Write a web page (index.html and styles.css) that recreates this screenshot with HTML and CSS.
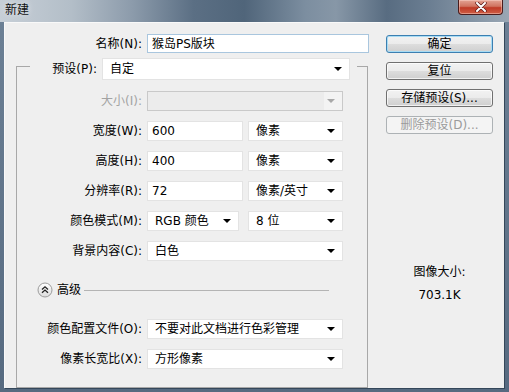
FILE: index.html
```html
<!DOCTYPE html>
<html lang="zh-CN">
<head>
  <meta charset="UTF-8" />
  <meta name="viewport" content="width=device-width, initial-scale=1.0"/>
  <title>新建</title>
  <link rel="stylesheet" href="styles.css">
</head>
<body>

  <div class="window">
    <div class="titlebar">
      <span class="title">新建</span>
      <div class="close-btn">
        <svg width="14" height="10" viewBox="0 0 14 10">
          <path d="M3 1 L11 9 M11 1 L3 9" stroke="#5a1a1a" stroke-width="3.4" stroke-linecap="round"/>
          <path d="M3 1 L11 9 M11 1 L3 9" stroke="#ffffff" stroke-width="2" stroke-linecap="round"/>
        </svg>
      </div>
    </div>

    <div class="client">
      <div class="form">
        <div class="row name-row">
          <label class="label name-label">名称(N):</label>
          <div class="field text focused w-name">猴岛PS版块</div>
        </div>

        <fieldset class="group">
          <legend class="preset">
            <label class="preset-label">预设(P):</label>
            <div class="field select w-preset">自定<span class="arrow"></span></div>
          </legend>

          <div class="row">
            <label class="label disabled">大小(I):</label>
            <div class="field select disabled w-full"><span class="arrow-zone"><span class="arrow"></span></span></div>
          </div>

          <div class="row">
            <label class="label">宽度(W):</label>
            <div class="field text w-num">600</div>
            <div class="field select w-unit">像素<span class="arrow"></span></div>
          </div>

          <div class="row">
            <label class="label">高度(H):</label>
            <div class="field text w-num">400</div>
            <div class="field select w-unit">像素<span class="arrow"></span></div>
          </div>

          <div class="row">
            <label class="label">分辨率(R):</label>
            <div class="field text w-num">72</div>
            <div class="field select w-unit">像素/英寸<span class="arrow"></span></div>
          </div>

          <div class="row">
            <label class="label">颜色模式(M):</label>
            <div class="field select w-mode">RGB 颜色<span class="arrow"></span></div>
            <div class="field select w-unit">8 位<span class="arrow"></span></div>
          </div>

          <div class="row">
            <label class="label">背景内容(C):</label>
            <div class="field select w-full">白色<span class="arrow"></span></div>
          </div>

          <div class="advanced">
            <svg class="adv-icon" width="16" height="16" viewBox="0 0 16 16">
              <defs>
                <linearGradient id="advbg" x1="0" y1="0" x2="0" y2="1">
                  <stop offset="0" stop-color="#ffffff"/>
                  <stop offset="1" stop-color="#dcdcdc"/>
                </linearGradient>
              </defs>
              <circle cx="8" cy="8" r="7" fill="url(#advbg)" stroke="#9c9c9c"/>
              <path d="M5 7.5 L8 4.8 L11 7.5 M5 10.8 L8 8.1 L11 10.8" fill="none" stroke="#222" stroke-width="1.3"/>
            </svg>
            <span class="adv-text">高级</span>
            <span class="adv-line"></span>
          </div>

          <div class="row">
            <label class="label">颜色配置文件(O):</label>
            <div class="field select w-full">不要对此文档进行色彩管理<span class="arrow"></span></div>
          </div>

          <div class="row">
            <label class="label">像素长宽比(X):</label>
            <div class="field select w-full">方形像素<span class="arrow"></span></div>
          </div>
        </fieldset>
      </div>

      <div class="side">
        <button class="btn default">确定</button>
        <button class="btn">复位</button>
        <button class="btn">存储预设(S)...</button>
        <button class="btn" disabled>删除预设(D)...</button>

        <div class="info-title">图像大小:</div>
        <div class="info-value">703.1K</div>
      </div>
    </div>
  </div>

</body>
</html>
```

FILE: styles.css
```css
* {
  margin: 0;
  padding: 0;
  box-sizing: border-box;
  font-family: "DejaVu Sans", "Noto Sans CJK SC", sans-serif;
}

body {
  background-color: #5d7187;
  color: #000;
  font-size: 12px;
  line-height: 16px;
}

.window {
  width: 509px;
  height: 392px;
  display: flex;
  flex-direction: column;
  background: linear-gradient(to bottom, #6d8196, #566a80);
}

/* title bar */
.titlebar {
  height: 22px;
  display: flex;
  justify-content: space-between;
  align-items: flex-start;
  padding-left: 5px;
  background: linear-gradient(to right, #c7cfd7 0%, #b3bec8 14%, #8c9bab 26%, #5b6f84 38%, #50657a 48%, #7c8ea0 60%, #8797a7 66%, #586c81 76%, #6a7d91 84%, #9aa7b4 100%);
}

.title {
  margin-top: 1px;
  color: #111;
  font-size: 12px;
  line-height: 18px;
  text-shadow: 0 0 6px rgba(255, 255, 255, 0.7);
}

.close-btn {
  width: 45px;
  height: 15px;
  margin-right: 6px;
  display: flex;
  align-items: center;
  justify-content: center;
  border: 1px solid #4a1c1c;
  border-top: none;
  border-radius: 0 0 4px 4px;
  background: linear-gradient(to bottom, #e3a394 0%, #d0735f 45%, #bf3a26 55%, #cf5e45 100%);
  box-shadow: inset 0 0 0 1px rgba(255, 220, 210, 0.45);
}

/* client area */
.client {
  flex: 1;
  margin: 0 5px 4px 4px;
  display: flex;
  background-color: #efefef;
  box-shadow: 1px 1px 0 #34475a, inset 1px 1px 0 #f9f9f9;
}

.form {
  width: 366px;
}

.row {
  display: flex;
  align-items: center;
  height: 20px;
  margin-bottom: 10px;
  white-space: nowrap;
}

.label {
  width: 112px;
  margin-right: 5px;
  text-align: right;
}

.label.disabled {
  color: #a3a3a3;
}

.name-row {
  margin-top: 12px;
  height: 19px;
  margin-bottom: 0;
}

.name-label {
  width: 138px;
}

/* fields */
.field {
  position: relative;
  height: 20px;
  display: flex;
  align-items: center;
  background-color: #fff;
  border: 1px solid #e3e3e3;
  white-space: nowrap;
}

.field.text {
  padding-left: 4px;
}

.field.select {
  padding-left: 7px;
}

.field.focused {
  height: 19px;
  border-color: #a9c6de;
}

.field.disabled {
  background-color: #ececec;
  border-color: #c9c9c9;
}

.w-name { width: 222px; }
.w-preset { width: 248px; height: 22px; padding-left: 6px; }
.w-full { width: 196px; }
.w-num { width: 96px; margin-right: 5px; }
.w-unit { width: 95px; }
.w-mode { width: 92px; margin-right: 9px; }

.arrow {
  position: absolute;
  right: 7px;
  top: 50%;
  margin-top: -2px;
  width: 0;
  height: 0;
  border-left: 4px solid transparent;
  border-right: 4px solid transparent;
  border-top: 4px solid #000;
}

.arrow-zone {
  position: absolute;
  right: 0;
  top: 0;
  bottom: 0;
  width: 18px;
  background-color: #f3f3f3;
}

.field.disabled .arrow {
  border-top-color: #a8a8a8;
}

/* group box */
.group {
  width: 352px;
  margin: -1px 0 0 12px;
  padding: 11px 0 8px 13px;
  border: 1px solid #a8a8a8;
  min-width: 0;
}

.preset {
  display: flex;
  align-items: center;
  padding: 6px 7px 0 0;
  white-space: nowrap;
}

.preset-label {
  width: 67px;
  margin-right: 5px;
  text-align: right;
}

.advanced {
  display: flex;
  align-items: center;
  height: 16px;
  margin: 21px 0 21px 7px;
}

.adv-text {
  margin-left: 4px;
}

.adv-line {
  width: 245px;
  height: 1px;
  margin-left: 3px;
  background-color: #b4b4b4;
}

/* right column */
.side {
  width: 107px;
  margin-left: 16px;
  padding-top: 13px;
  display: flex;
  flex-direction: column;
  align-items: center;
}

.btn {
  width: 107px;
  height: 18px;
  margin-bottom: 9px;
  font-size: 12px;
  line-height: 14px;
  color: #000;
  border: 1px solid #707070;
  border-radius: 3px;
  background: linear-gradient(to bottom, #f2f2f2 0%, #ebebeb 50%, #dddddd 51%, #cfcfcf 100%);
  box-shadow: inset 0 0 0 1px rgba(255, 255, 255, 0.7);
}

.btn.default {
  border-color: #3c7fb1;
  box-shadow: inset 0 0 0 1px #a8dcf4;
}

.btn:disabled {
  color: #9b9b9b;
  border-color: #adb2b5;
  background: #f4f4f4;
  box-shadow: none;
}

.info-title {
  margin-top: 121px;
}

.info-value {
  margin-top: 7px;
}
```
